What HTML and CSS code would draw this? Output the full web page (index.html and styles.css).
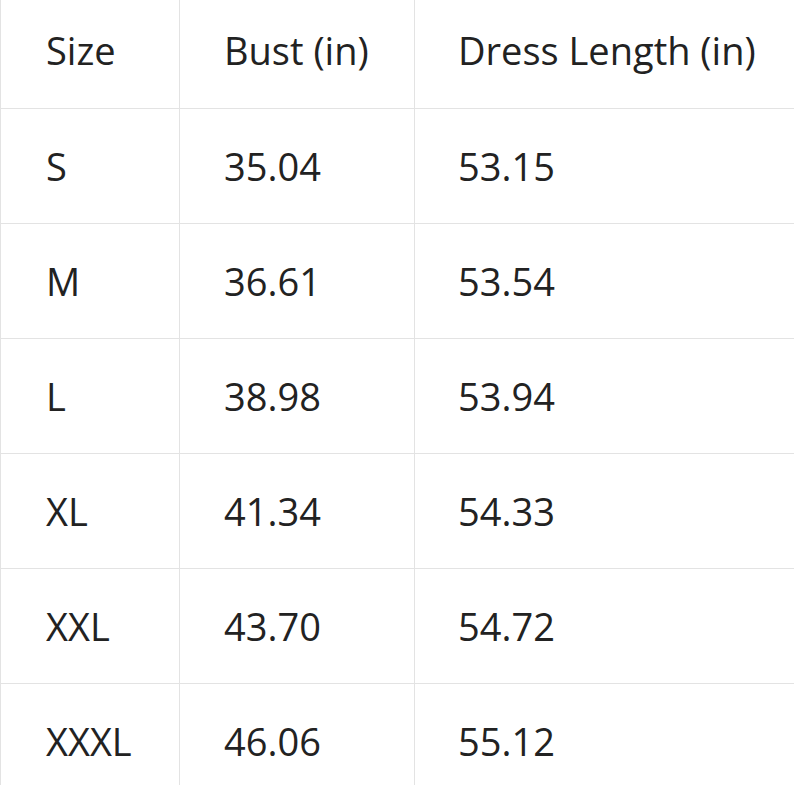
FILE: index.html
```html
<!DOCTYPE html>
<html>
<head>
<meta charset="utf-8">
<link rel="stylesheet" href="styles.css">
</head>
<body>
<table class="sizes">
  <tr class="head"><td>Size</td><td>Bust (in)</td><td>Dress Length (in)</td></tr>
  <tr><td>S</td><td>35.04</td><td>53.15</td></tr>
  <tr><td>M</td><td>36.61</td><td>53.54</td></tr>
  <tr><td>L</td><td>38.98</td><td>53.94</td></tr>
  <tr><td>XL</td><td>41.34</td><td>54.33</td></tr>
  <tr><td>XXL</td><td>43.70</td><td>54.72</td></tr>
  <tr><td>XXXL</td><td>46.06</td><td>55.12</td></tr>
</table>
</body>
</html>
```
FILE: styles.css
```css
html, body {
  margin: 0;
  padding: 0;
  background: #fff;
  overflow: hidden;
}
.sizes {
  border-collapse: collapse;
  width: 800px;
  table-layout: fixed;
  font-family: "Open Sans", "Noto Sans", sans-serif;
  font-size: 38px;
  color: #222;
}
.sizes td {
  border: 1px solid #e3e3e3;
  height: 115px;
  padding: 0 0 0 45px;
  vertical-align: middle;
  box-sizing: border-box;
  white-space: nowrap;
}
.sizes td:nth-child(1) { width: 179px; }
.sizes td:nth-child(2) { width: 235px; padding-left: 44px; }
.sizes td:nth-child(3) { padding-left: 43px; }
.sizes tr.head td {
  border-top: none;
  height: 108px;
  padding-bottom: 7px;
}
```
